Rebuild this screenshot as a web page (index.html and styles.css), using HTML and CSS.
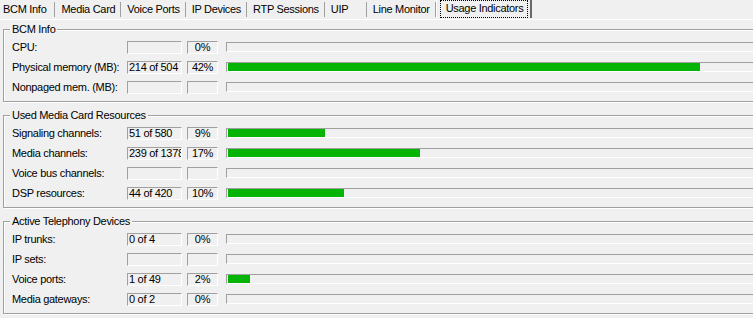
FILE: index.html
```
<!DOCTYPE html>
<html lang="en">
<head>
    <meta charset="UTF-8">
    <title>Usage Indicators</title>
    <link rel="stylesheet" href="styles.css">
</head>
<body>
    <div class="tabs">
        <div class="tab tab-first">BCM Info</div>
        <div class="tab">Media Card</div>
        <div class="tab">Voice Ports</div>
        <div class="tab">IP Devices</div>
        <div class="tab">RTP Sessions</div>
        <div class="tab tab-uip">UIP</div>
        <div class="tab">Line Monitor</div>
        <div class="tab tab-activa"><span class="foco">Usage Indicators</span></div>
    </div>

    <div class="contenido">
        <fieldset class="grupo">
            <legend>BCM Info</legend>
            <div class="filas">
                <div class="etiqueta">CPU:</div>
                <div class="caja"></div>
                <div class="caja pct">0%</div>
                <div class="barra"><div class="relleno" style="width: 0px;"></div></div>

                <div class="etiqueta">Physical memory (MB):</div>
                <div class="caja">214 of 504</div>
                <div class="caja pct">42%</div>
                <div class="barra"><div class="relleno" style="width: 472px;"></div></div>

                <div class="etiqueta">Nonpaged mem. (MB):</div>
                <div class="caja"></div>
                <div class="caja pct"></div>
                <div class="barra"><div class="relleno" style="width: 0px;"></div></div>
            </div>
        </fieldset>

        <fieldset class="grupo">
            <legend>Used Media Card Resources</legend>
            <div class="filas">
                <div class="etiqueta">Signaling channels:</div>
                <div class="caja">51 of 580</div>
                <div class="caja pct">9%</div>
                <div class="barra"><div class="relleno" style="width: 97px;"></div></div>

                <div class="etiqueta">Media channels:</div>
                <div class="caja">239 of 1378</div>
                <div class="caja pct">17%</div>
                <div class="barra"><div class="relleno" style="width: 192px;"></div></div>

                <div class="etiqueta">Voice bus channels:</div>
                <div class="caja"></div>
                <div class="caja pct"></div>
                <div class="barra"><div class="relleno" style="width: 0px;"></div></div>

                <div class="etiqueta">DSP resources:</div>
                <div class="caja">44 of 420</div>
                <div class="caja pct">10%</div>
                <div class="barra"><div class="relleno" style="width: 116px;"></div></div>
            </div>
        </fieldset>

        <fieldset class="grupo">
            <legend>Active Telephony Devices</legend>
            <div class="filas">
                <div class="etiqueta">IP trunks:</div>
                <div class="caja">0 of 4</div>
                <div class="caja pct">0%</div>
                <div class="barra"><div class="relleno" style="width: 0px;"></div></div>

                <div class="etiqueta">IP sets:</div>
                <div class="caja"></div>
                <div class="caja pct"></div>
                <div class="barra"><div class="relleno" style="width: 0px;"></div></div>

                <div class="etiqueta">Voice ports:</div>
                <div class="caja">1 of 49</div>
                <div class="caja pct">2%</div>
                <div class="barra"><div class="relleno" style="width: 22px;"></div></div>

                <div class="etiqueta">Media gateways:</div>
                <div class="caja">0 of 2</div>
                <div class="caja pct">0%</div>
                <div class="barra"><div class="relleno" style="width: 0px;"></div></div>
            </div>
        </fieldset>
    </div>
</body>
</html>
```

FILE: styles.css
```
:root {
    --fondo: #f0f0f0;
    --gris: #a0a0a0;
    --oscuro: #696969;
    --blanco: #ffffff;
    --verde: #06b406;
}

body {
    margin: 0;
    width: 753px;
    height: 318px;
    overflow: hidden;
    background-color: var(--fondo);
    font-family: "Liberation Sans", Arial, sans-serif;
    font-size: 11px;
    letter-spacing: -0.3px;
    color: #000;
}

.tabs {
    display: flex;
    height: 19px;
    border-bottom: 1px solid var(--blanco);
}

.tab {
    margin-top: 2px;
    height: 15px;
    line-height: 14px;
    padding: 0 5px 0 6px;
    border-right: 1px solid var(--gris);
    white-space: nowrap;
}

.tab-first {
    padding-left: 3px;
    padding-right: 8px;
}

.tab-uip {
    min-width: 30px;
}

.tab-activa {
    margin-top: 0;
    height: 18px;
    padding: 1px 3px 0 4px;
    border-left: 1px solid var(--blanco);
    border-right: 2px solid var(--oscuro);
    box-sizing: border-box;
}

    .tab-activa .foco {
        display: inline-block;
        outline: 1px dotted #000;
        outline-offset: 0;
        padding: 0 4px 1px 5px;
        line-height: 15px;
    }

.contenido {
    width: 1200px;
    padding: 3px 0 0 3px;
}

.grupo {
    margin: 0 0 7px 0;
    padding: 5px 8px 7px 8px;
    border: 1px solid var(--gris);
    box-shadow: inset 1px 1px 0 var(--blanco), 1px 1px 0 var(--blanco);
    min-width: 0;
}

    .grupo legend {
        margin-left: -2px;
        padding: 0 2px;
        line-height: 13px;
        background-color: var(--fondo);
    }

.filas {
    display: grid;
    grid-template-columns: 110px 55px 31px 1fr;
    grid-auto-rows: 13px;
    column-gap: 5px;
    row-gap: 7px;
}

.etiqueta {
    line-height: 13px;
    white-space: nowrap;
}

.caja {
    box-sizing: border-box;
    height: 13px;
    border: 1px solid;
    border-color: var(--gris) var(--blanco) var(--blanco) var(--gris);
    padding-left: 1px;
    line-height: 11px;
    white-space: nowrap;
    overflow: hidden;
}

.pct {
    text-align: center;
    padding-left: 0;
}

.barra {
    box-sizing: border-box;
    height: 10px;
    margin: 1px 0 0 3px;
    padding: 0 1px;
    border: 1px solid;
    border-color: var(--gris) var(--blanco) var(--blanco) var(--gris);
}

.relleno {
    height: 8px;
    background-color: var(--verde);
}
```
